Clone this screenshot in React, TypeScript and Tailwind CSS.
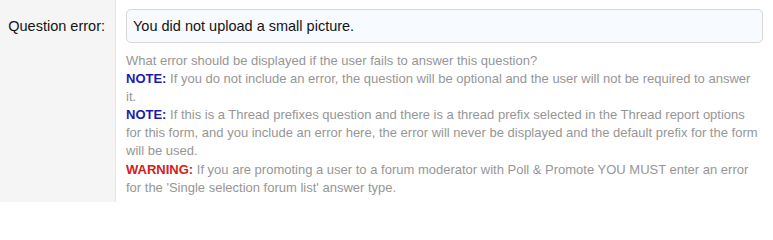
import React from 'react';

const App = () => {
  return (
    <div className="flex h-[202px] w-[773px] bg-white font-['Liberation_Sans',Arial,sans-serif]">
      <div className="w-[116px] shrink-0 border-r border-[#e5e5e5] bg-[#f5f5f5] pt-[16px] pr-[10px] text-right text-[14.5px] leading-[20px] text-[#141414]">
        Question error:
      </div>
      <div className="flex-1 pl-[10px] pr-[10px] pt-[9px]">
        <input
          type="text"
          defaultValue="You did not upload a small picture."
          className="block h-[34px] w-full rounded-[5px] border border-[#d6d6d6] bg-[#f7faff] px-[6px] text-[14.5px] text-[#141414] outline-none"
        />
        <p className="mt-[9px] text-[13px] leading-[18.1px] text-[#969696]">
          What error should be displayed if the user fails to answer this question?
          <br />
          <b className="text-[#1a1ab0]">NOTE:</b> If you do not include an error, the question will be optional and the user will not be required to answer it.
          <br />
          <b className="text-[#1a1ab0]">NOTE:</b> If this is a Thread prefixes question and there is a thread prefix selected in the Thread report options for this form, and you include an error here, the error will never be displayed and the default prefix for the form will be used.
          <br />
          <b className="text-[#d42020]">WARNING:</b> If you are promoting a user to a forum moderator with Poll &amp; Promote YOU MUST enter an error for the 'Single selection forum list' answer type.
        </p>
      </div>
    </div>
  );
};

export default App;
